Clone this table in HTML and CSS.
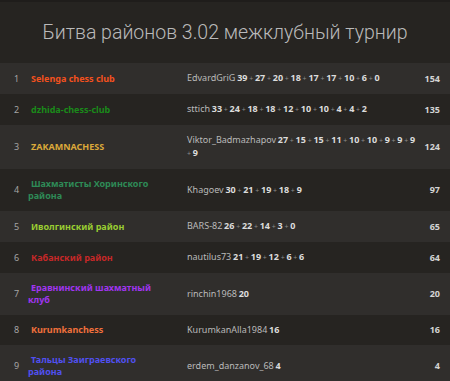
FILE: index.html
```html
<!DOCTYPE html>
<html lang="ru">
<head>
<meta charset="utf-8">
<title>Битва районов</title>
<link rel="stylesheet" href="styles.css">
</head>
<body>
<div class="page">
  <div class="topline"></div>
  <header class="head"><h1>Битва районов 3.02 межклубный турнир</h1></header>
  <table class="standing">
    <colgroup><col class="c-rank"><col class="c-team"><col class="c-players"><col class="c-total"></colgroup>
    <tbody>
      <tr>
        <td class="rank">1</td>
        <td class="team t0">Selenga chess club</td>
        <td class="players">EdvardGriG <b>39</b> <i>+</i>&nbsp;<b>27</b> <i>+</i>&nbsp;<b>20</b> <i>+</i>&nbsp;<b>18</b> <i>+</i>&nbsp;<b>17</b> <i>+</i>&nbsp;<b>17</b> <i>+</i>&nbsp;<b>10</b> <i>+</i>&nbsp;<b>6</b> <i>+</i>&nbsp;<b>0</b></td>
        <td class="total">154</td>
      </tr>
      <tr>
        <td class="rank">2</td>
        <td class="team t1">dzhida-chess-club</td>
        <td class="players">sttich <b>33</b> <i>+</i>&nbsp;<b>24</b> <i>+</i>&nbsp;<b>18</b> <i>+</i>&nbsp;<b>18</b> <i>+</i>&nbsp;<b>12</b> <i>+</i>&nbsp;<b>10</b> <i>+</i>&nbsp;<b>10</b> <i>+</i>&nbsp;<b>4</b> <i>+</i>&nbsp;<b>4</b> <i>+</i>&nbsp;<b>2</b></td>
        <td class="total">135</td>
      </tr>
      <tr>
        <td class="rank">3</td>
        <td class="team t2">ZAKAMNACHESS</td>
        <td class="players">Viktor_Badmazhapov <b>27</b> <i>+</i>&nbsp;<b>15</b> <i>+</i>&nbsp;<b>15</b> <i>+</i>&nbsp;<b>11</b> <i>+</i>&nbsp;<b>10</b> <i>+</i>&nbsp;<b>10</b> <i>+</i>&nbsp;<b>9</b> <i>+</i>&nbsp;<b>9</b> <i>+</i>&nbsp;<b>9</b> <i>+</i>&nbsp;<b>9</b></td>
        <td class="total">124</td>
      </tr>
      <tr>
        <td class="rank">4</td>
        <td class="team t3">Шахматисты Хоринского района</td>
        <td class="players">Khagoev <b>30</b> <i>+</i>&nbsp;<b>21</b> <i>+</i>&nbsp;<b>19</b> <i>+</i>&nbsp;<b>18</b> <i>+</i>&nbsp;<b>9</b></td>
        <td class="total">97</td>
      </tr>
      <tr>
        <td class="rank">5</td>
        <td class="team t4">Иволгинский район</td>
        <td class="players">BARS-82 <b>26</b> <i>+</i>&nbsp;<b>22</b> <i>+</i>&nbsp;<b>14</b> <i>+</i>&nbsp;<b>3</b> <i>+</i>&nbsp;<b>0</b></td>
        <td class="total">65</td>
      </tr>
      <tr>
        <td class="rank">6</td>
        <td class="team t5">Кабанский район</td>
        <td class="players">nautilus73 <b>21</b> <i>+</i>&nbsp;<b>19</b> <i>+</i>&nbsp;<b>12</b> <i>+</i>&nbsp;<b>6</b> <i>+</i>&nbsp;<b>6</b></td>
        <td class="total">64</td>
      </tr>
      <tr>
        <td class="rank">7</td>
        <td class="team t6">Еравнинский шахматный клуб</td>
        <td class="players">rinchin1968 <b>20</b></td>
        <td class="total">20</td>
      </tr>
      <tr>
        <td class="rank">8</td>
        <td class="team t7">Kurumkanchess</td>
        <td class="players">KurumkanAlla1984 <b>16</b></td>
        <td class="total">16</td>
      </tr>
      <tr>
        <td class="rank">9</td>
        <td class="team t8">Тальцы Заиграевского района</td>
        <td class="players">erdem_danzanov_68 <b>4</b></td>
        <td class="total">4</td>
      </tr>
    </tbody>
  </table>
</div>
</body>
</html>
```
FILE: styles.css
```css
html, body {
  margin: 0;
  padding: 0;
  background: #262421;
}
body {
  font-family: "Noto Sans", "DejaVu Sans", sans-serif;
  color: #bababa;
  overflow: hidden;
}
.page {
  width: 450px;
}
.topline {
  height: 2px;
  background: #1f1d1b;
}
.head {
  height: 61px;
  display: flex;
  align-items: center;
  justify-content: center;
  background: #262421;
}
.head h1 {
  margin: 0;
  font-family: Roboto, "Noto Sans", sans-serif;
  font-weight: 300;
  font-size: 19.5px;
  color: #bababa;
  line-height: 1;
}
.standing {
  width: 100%;
  border-collapse: collapse;
  table-layout: fixed;
  font-size: 9px;
  line-height: 12px;
}
.c-rank { width: 28px; }
.c-team { width: 159px; }
.c-players { width: 231px; }
.c-total { width: 32px; }
.standing tr:nth-child(odd) { background: #302e2c; }
.standing tr:nth-child(even) { background: #262421; }
.standing td {
  padding: 9px 0;
  vertical-align: middle;
}
.rank {
  padding-left: 14px !important;
  color: #a5a5a5;
}
.team {
  font-weight: 700;
  text-indent: 3px;
  padding-right: 24px !important;
}
.players {
  word-spacing: -0.6px;
}
.players b {
  font-weight: 700;
  color: #dcdcdc;
}
.players i {
  font-style: normal;
  color: #8a8a8a;
  font-size: 7px;
}
.total {
  text-align: right;
  padding-right: 10px !important;
  font-weight: 700;
  color: #d4d4d4;
}
.t0 { color: #f4511e; }
.t1 { color: #1a8a1a; }
.t2 { color: #dba93a; }
.t3 { color: #2e8b57; }
.t4 { color: #9acd32; }
.t5 { color: #c62828; }
.t6 { color: #a035f0; }
.t7 { color: #f0703c; }
.t8 { color: #5050f0; }
```
